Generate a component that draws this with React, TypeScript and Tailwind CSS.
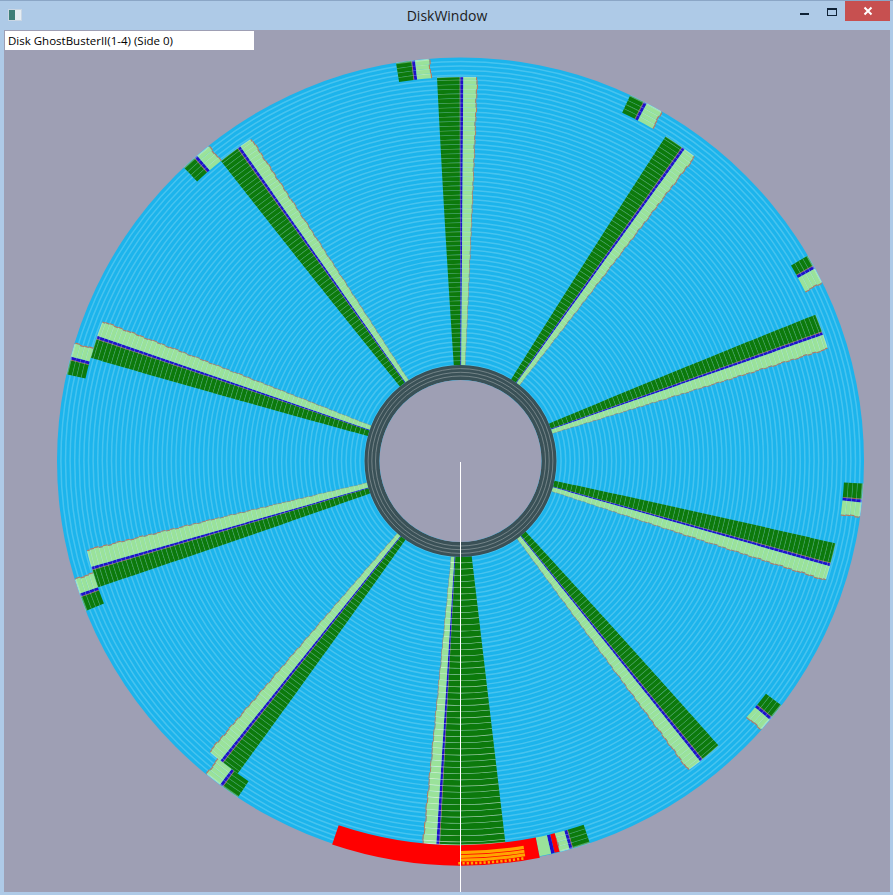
import React from 'react';

const CX = 460.5;
const CY = 461;
const R_HOLE = 81;
const R_DATA = 96;
const R_MAIN = 384;
const R_OUT = 403;
const PITCH = 4.6;

function pt(r: number, deg: number) {
  const a = (deg * Math.PI) / 180;
  return `${(CX + r * Math.sin(a)).toFixed(2)} ${(CY - r * Math.cos(a)).toFixed(2)}`;
}

function arc(r1: number, r2: number, a1: number, a2: number) {
  const large = a2 - a1 > 180 ? 1 : 0;
  return `M${pt(r1, a1)}A${r1} ${r1} 0 ${large} 1 ${pt(r1, a2)}L${pt(r2, a2)}A${r2} ${r2} 0 ${large} 0 ${pt(r2, a1)}Z`;
}

// g = start of the green part, b = start of the blue mark, l = end of the light part
const spokes = [
  { g: -3.5, b: 0, l: 2.5 },
  { g: 32.3, b: 35.3, l: 37.6 },
  { g: 67.6, b: 70.4, l: 73 },
  { g: 102.4, b: 105.5, l: 108.1 },
  { g: 137.8, b: 141, l: 143.6 },
  { g: 215.5, b: 218.3, l: 220.8 },
  { g: 250.8, b: 253.6, l: 256.6 },
  { g: 285.6, b: 288.6, l: 291.3 },
  { g: 321.4, b: 324.6, l: 327 },
];

const stubs = [
  { g: -9.2, b: -6.9, l: -4.4 },
  { g: 24.9, b: 27.1, l: 30 },
  { g: 59.4, b: 61.1, l: 63.8 },
  { g: 93.2, b: 95.5, l: 98 },
  { g: 127.3, b: 129.5, l: 131.8 },
  { g: 161.3, b: 163.9, l: 165.8 },
  { g: 213.5, b: 216.2, l: 219.1 },
  { g: 248.2, b: 250.4, l: 253 },
  { g: 282.4, b: 284.6, l: 287 },
  { g: 316.7, b: 318.8, l: 321.4 },
];

type WedgeProps = {
  g: number;
  b: number;
  l: number;
  from: number;
  to: number;
  pitch?: number;
  taper?: number;
  line?: number;
};

function Wedge({ g, b, l, from, to, pitch = PITCH, taper = 0, line = 0.28 }: WedgeProps) {
  const rows = [];
  let i = 0;
  for (let r = from; r < to - 0.5; r += pitch) {
    const r2 = Math.min(r + pitch, to);
    const wob = ((i * 7) % 5) * 0.045;
    // inner rows are a little wider in angle than outer ones
    const t = ((to - r) / (to - from)) * taper;
    const start = g - t;
    const end = l + t * 0.6 - wob;
    rows.push(
      <g key={r}>
        <path d={arc(r, r2, start, b - 0.12)} fill="#0c7a0c" />
        <path d={arc(r, r2, b - 0.12, b)} fill="#a8603c" />
        <path d={arc(r, r2, b, b + 0.42)} fill="#2010c8" />
        <path d={arc(r, r2, b + 0.42, end)} fill="#9ae29a" />
        <path d={arc(r, r2, end, end + 0.16)} fill="#c07a58" />
        <path d={arc(r2 - 0.6, r2 + 0.6, start, end)} fill="#ffffff" fillOpacity={line} />
      </g>,
    );
    i++;
  }
  return <g>{rows}</g>;
}

function Disk() {
  const trackLines: number[] = [];
  for (let r = R_DATA; r < R_OUT - 1; r += PITCH) trackLines.push(r);

  const ticks = [];
  for (let a = 171; a < 180; a += 0.6) {
    ticks.push(<path key={a} d={arc(401, 403.6, a, a + 0.32)} fill="#ffa500" />);
  }

  return (
    <svg viewBox="4 30 886 862" className="block w-full h-full">
      <circle cx={CX} cy={CY} r={R_OUT + 0.5} fill="#1cb4ec" />

      {trackLines.map((r) => (
        <circle key={r} cx={CX} cy={CY} r={r} fill="none" stroke="#8fdcf5" strokeOpacity={0.38} strokeWidth={1.5} />
      ))}

      {spokes.map((s) => (
        <Wedge key={s.g} {...s} from={R_DATA} to={R_MAIN} taper={0.5} />
      ))}
      {stubs.map((s) => (
        <Wedge key={s.g} {...s} from={R_MAIN} to={R_OUT} />
      ))}

      {/* the long sector at the bottom has its own, wider rows */}
      <Wedge g={173.3} b={183.2} l={185.6} from={R_DATA} to={R_MAIN} pitch={6.2} line={0.6} />

      <path d={arc(R_MAIN, R_OUT, 165.8, 166.5)} fill="#ff0000" />
      <path d={arc(R_MAIN, R_OUT, 166.5, 167)} fill="#2010c8" />
      <path d={arc(R_MAIN, R_OUT, 167, 168.7)} fill="#9ae29a" />

      <path d={arc(R_MAIN, 404.5, 168.7, 198.5)} fill="#ff0000" />
      <path d={arc(390, 393.2, 170.7, 180)} fill="#ffa500" />
      <path d={arc(393.9, 396.9, 170.7, 180)} fill="#ffa500" />
      <path d={arc(397.6, 400.6, 170.7, 180)} fill="#ffa500" />
      {ticks}

      <circle cx={CX} cy={CY} r={(R_HOLE + R_DATA) / 2} fill="none" stroke="#3a5157" strokeWidth={R_DATA - R_HOLE} />
      {[85, 88.7, 92.4].map((r) => (
        <circle key={r} cx={CX} cy={CY} r={r} fill="none" stroke="#8c9a9c" strokeWidth={0.7} />
      ))}
      <circle cx={CX} cy={CY} r={R_HOLE} fill="#9e9fb4" />

      <line x1={CX} y1={462} x2={CX} y2={892} stroke="#ffffff" strokeWidth={1} />
    </svg>
  );
}

export default function App() {
  return (
    <div className="w-[893px] h-[895px] flex flex-col bg-[#aecae7] border-t border-[#8ba6c6] font-['Open_Sans',sans-serif] overflow-hidden">
      <div className="relative h-[29px] flex items-center justify-center shrink-0">
        <div className="absolute left-[8px] top-[8px] w-[14px] h-[12px] flex border border-[#c9d6e4] bg-[#e6edf2]">
          <div className="w-[6px] h-full bg-[#3f7f78]" />
        </div>
        <span className="text-[14px] text-[#1c1c1c] ml-[1px]">DiskWindow</span>
        <div className="absolute right-[3px] top-0 flex items-start">
          <div className="mt-[12px] mr-[18px] w-[9px] h-[2px] bg-[#0f2236]" />
          <div className="mt-[7px] mr-[8px] w-[10px] h-[8px] border border-[#0f2236] border-t-2" />
          <div className="w-[45px] h-[20px] bg-[#c75050] flex items-center justify-center">
            <svg width="10" height="10" viewBox="0 0 10 10">
              <path d="M1.5 1.5l7 7M8.5 1.5l-7 7" stroke="#ffffff" strokeWidth="2" />
            </svg>
          </div>
        </div>
      </div>
      <div className="relative flex-1 ml-[4px] mr-[3px] mb-[3px] bg-[#9e9fb4] overflow-hidden">
        <Disk />
        <div className="absolute left-[1px] top-[1px] w-[249px] h-[19px] bg-white pl-[3px] text-[11.5px] leading-[19px] text-black whitespace-nowrap">
          Disk GhostBusterII(1-4) (Side 0)
        </div>
      </div>
    </div>
  );
}
